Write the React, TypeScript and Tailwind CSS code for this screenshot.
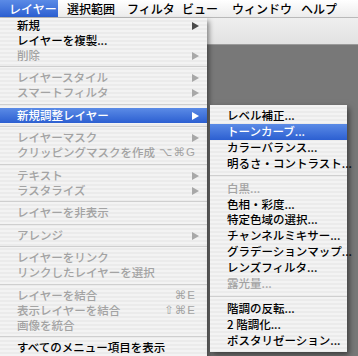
import React from "react";

type Item =
  | { sep: true }
  | {
      sep?: false;
      label: string;
      disabled?: boolean;
      arrow?: boolean;
      shortcut?: string;
      active?: boolean;
    };

const mainItems: Item[] = [
  { label: "新規", arrow: true },
  { label: "レイヤーを複製..." },
  { label: "削除", disabled: true, arrow: true },
  { sep: true },
  { label: "レイヤースタイル", disabled: true, arrow: true },
  { label: "スマートフィルタ", disabled: true, arrow: true },
  { sep: true },
  { label: "新規調整レイヤー", arrow: true, active: true },
  { sep: true },
  { label: "レイヤーマスク", disabled: true, arrow: true },
  { label: "クリッピングマスクを作成", disabled: true, shortcut: "⌥⌘G" },
  { sep: true },
  { label: "テキスト", disabled: true, arrow: true },
  { label: "ラスタライズ", disabled: true, arrow: true },
  { sep: true },
  { label: "レイヤーを非表示", disabled: true },
  { sep: true },
  { label: "アレンジ", disabled: true, arrow: true },
  { sep: true },
  { label: "レイヤーをリンク", disabled: true },
  { label: "リンクしたレイヤーを選択", disabled: true },
  { sep: true },
  { label: "レイヤーを結合", disabled: true, shortcut: "⌘E" },
  { label: "表示レイヤーを結合", disabled: true, shortcut: "⇧⌘E" },
  { label: "画像を統合", disabled: true },
  { sep: true },
  { label: "すべてのメニュー項目を表示" },
];

const subItems: Item[] = [
  { label: "レベル補正..." },
  { label: "トーンカーブ...", active: true },
  { label: "カラーバランス..." },
  { label: "明るさ・コントラスト..." },
  { sep: true },
  { label: "白黒...", disabled: true },
  { label: "色相・彩度..." },
  { label: "特定色域の選択..." },
  { label: "チャンネルミキサー..." },
  { label: "グラデーションマップ..." },
  { label: "レンズフィルタ..." },
  { label: "露光量...", disabled: true },
  { sep: true },
  { label: "階調の反転..." },
  { label: "2 階調化..." },
  { label: "ポスタリゼーション..." },
];

const stripes =
  "bg-[repeating-linear-gradient(180deg,#f3f3f3_0px,#f3f3f3_2px,#ebebeb_2px,#ebebeb_4px)]";

function Arrow({ color }: { color: string }) {
  return (
    <svg width="7" height="8" viewBox="0 0 7 8" className="shrink-0">
      <path d="M0 0 L7 4 L0 8 Z" fill={color} />
    </svg>
  );
}

function MainRow({ item }: { item: Item }) {
  if (item.sep) {
    return (
      <div className="h-[7.5px] flex items-center">
        <div className="h-px w-full bg-[#cfcfcf]" />
      </div>
    );
  }
  const color = item.active
    ? "text-white"
    : item.disabled
    ? "text-[#a3a3a3]"
    : "text-black";
  return (
    <div
      className={`h-[15px] flex items-center pl-[17px] pr-[8px] ${color} ${
        item.active ? "bg-[linear-gradient(180deg,#5b8be6,#2c5fd1)]" : ""
      }`}
    >
      <span className="flex-1 whitespace-nowrap">{item.label}</span>
      {item.shortcut && (
        <span className="text-[#a3a3a3] tracking-[1px] pr-[3px] font-['Liberation_Sans','DejaVu_Sans',sans-serif]">
          {item.shortcut}
        </span>
      )}
      {item.arrow && (
        <Arrow
          color={item.active ? "#ffffff" : item.disabled ? "#a8a8a8" : "#4a4a4a"}
        />
      )}
    </div>
  );
}

function SubRow({ item }: { item: Item }) {
  if (item.sep) {
    return (
      <div className="h-[9.5px] flex items-center">
        <div className="h-px w-full bg-[#cfcfcf]" />
      </div>
    );
  }
  const color = item.active
    ? "text-white"
    : item.disabled
    ? "text-[#a3a3a3]"
    : "text-black";
  return (
    <div
      className={`h-[15.8px] flex items-center pl-[17px] pr-[8px] ${color} ${
        item.active ? "bg-[linear-gradient(180deg,#5b8be6,#2c5fd1)]" : ""
      }`}
    >
      <span className="whitespace-nowrap">{item.label}</span>
    </div>
  );
}

export default function App() {
  return (
    <div className="relative w-[358px] h-[356px] overflow-hidden bg-[#787878] text-[11.5px] font-medium font-['Noto_Sans_CJK_JP','Noto_Sans',sans-serif] leading-none">
      {/* menu bar */}
      <div className="h-[18px] flex items-stretch text-[12px] bg-[linear-gradient(180deg,#ffffff,#ececec)] border-b border-[#b9b9b9]">
        <div className="w-[58px] flex items-center pl-[9px] text-white bg-[linear-gradient(180deg,#5b8be6,#2c5fd1)]">
          レイヤー
        </div>
        <div className="ml-[9px] w-[60px] flex items-center text-black whitespace-nowrap">選択範囲</div>
        <div className="w-[55px] flex items-center text-black whitespace-nowrap">フィルタ</div>
        <div className="w-[50px] flex items-center text-black whitespace-nowrap">ビュー</div>
        <div className="w-[69px] flex items-center text-black whitespace-nowrap">ウィンドウ</div>
        <div className="flex items-center text-black whitespace-nowrap">ヘルプ</div>
      </div>
      {/* options bar */}
      <div className="h-[27px] bg-[linear-gradient(180deg,#efefef,#e2e2e2)] border-b border-[#9a9a9a]" />

      {/* main menu */}
      <div
        className={`absolute left-0 top-[18px] w-[207px] pb-[4px] ${stripes} shadow-[2px_3px_5px_rgba(0,0,0,0.45)]`}
      >
        {mainItems.map((it, i) => (
          <MainRow key={i} item={it} />
        ))}
      </div>

      {/* submenu */}
      <div
        className={`absolute left-[210px] top-[105px] w-[137px] pt-[3px] pb-[4px] ${stripes} shadow-[2px_3px_6px_rgba(0,0,0,0.5)]`}
      >
        {subItems.map((it, i) => (
          <SubRow key={i} item={it} />
        ))}
      </div>
    </div>
  );
}
